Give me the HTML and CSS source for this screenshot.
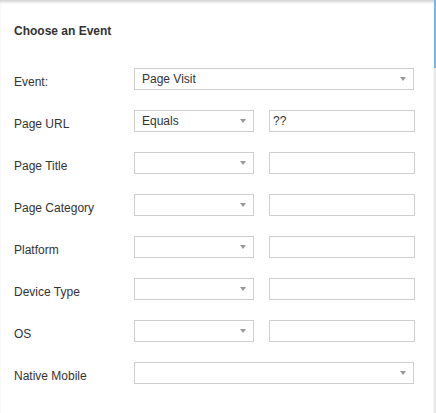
FILE: index.html
```html
<!DOCTYPE html>
<html lang="en">
<head>
    <meta charset="UTF-8">
    <meta name="viewport" content="width=device-width, initial-scale=1.0">
    <title>Choose an Event</title>
    <link rel="stylesheet" href="styles.css">
</head>
<body>
    <div class="panel">
        <h2 class="title">Choose an Event</h2>
        <div class="form">
            <div class="row">
                <label class="label">Event:</label>
                <div class="select wide"><span>Page Visit</span><i class="arrow"></i></div>
            </div>
            <div class="row">
                <label class="label">Page URL</label>
                <div class="select"><span>Equals</span><i class="arrow"></i></div>
                <div class="input">??</div>
            </div>
            <div class="row">
                <label class="label">Page Title</label>
                <div class="select"><span></span><i class="arrow"></i></div>
                <div class="input"></div>
            </div>
            <div class="row">
                <label class="label">Page Category</label>
                <div class="select"><span></span><i class="arrow"></i></div>
                <div class="input"></div>
            </div>
            <div class="row">
                <label class="label">Platform</label>
                <div class="select"><span></span><i class="arrow"></i></div>
                <div class="input"></div>
            </div>
            <div class="row">
                <label class="label">Device Type</label>
                <div class="select"><span></span><i class="arrow"></i></div>
                <div class="input"></div>
            </div>
            <div class="row">
                <label class="label">OS</label>
                <div class="select"><span></span><i class="arrow"></i></div>
                <div class="input"></div>
            </div>
            <div class="row">
                <label class="label">Native Mobile</label>
                <div class="select wide"><span></span><i class="arrow"></i></div>
            </div>
        </div>
    </div>
    <div class="scrollbar">
        <div class="thumb"></div>
    </div>
</body>
</html>
```

FILE: styles.css
```css
body {
    display: flex;
    margin: 0;
    height: 100vh;
    background-color: #ffffff;
    font-family: "Liberation Sans", Arial, sans-serif;
    font-size: 12px;
    color: #333;
    overflow: hidden;
}

.panel {
    flex: 1;
    box-shadow: inset 0 3px 3px -1px rgba(0, 0, 0, 0.18);
}

.title {
    margin: 0;
    padding: 24px 14px 0;
    font-size: 12px;
    line-height: 14px;
    font-weight: bold;
    color: #333;
}

.form {
    display: flex;
    flex-direction: column;
    gap: 20px;
    margin-top: 30px;
}

.row {
    display: flex;
    height: 22px;
}

.label {
    flex: none;
    width: 134px;
    padding: 7px 0 0 14px;
    box-sizing: border-box;
    line-height: 14px;
}

.select {
    flex: none;
    display: flex;
    justify-content: space-between;
    align-items: center;
    width: 120px;
    height: 22px;
    box-sizing: border-box;
    padding: 0 7px;
    border: 1px solid #cfcfcf;
    line-height: 21px;
}

.select.wide {
    width: 280px;
}

.arrow {
    width: 0;
    height: 0;
    margin-top: -1px;
    border-top: 4px solid #999;
    border-left: 3.5px solid transparent;
    border-right: 3.5px solid transparent;
}

.input {
    flex: none;
    width: 146px;
    height: 22px;
    box-sizing: border-box;
    margin-left: 15px;
    padding: 0 3px;
    border: 1px solid #cfcfcf;
    line-height: 20px;
}

.scrollbar {
    flex: none;
    width: 2px;
    background-color: #e8e8e8;
}

.thumb {
    height: 68px;
    background-color: #6cb9f6;
}
```
